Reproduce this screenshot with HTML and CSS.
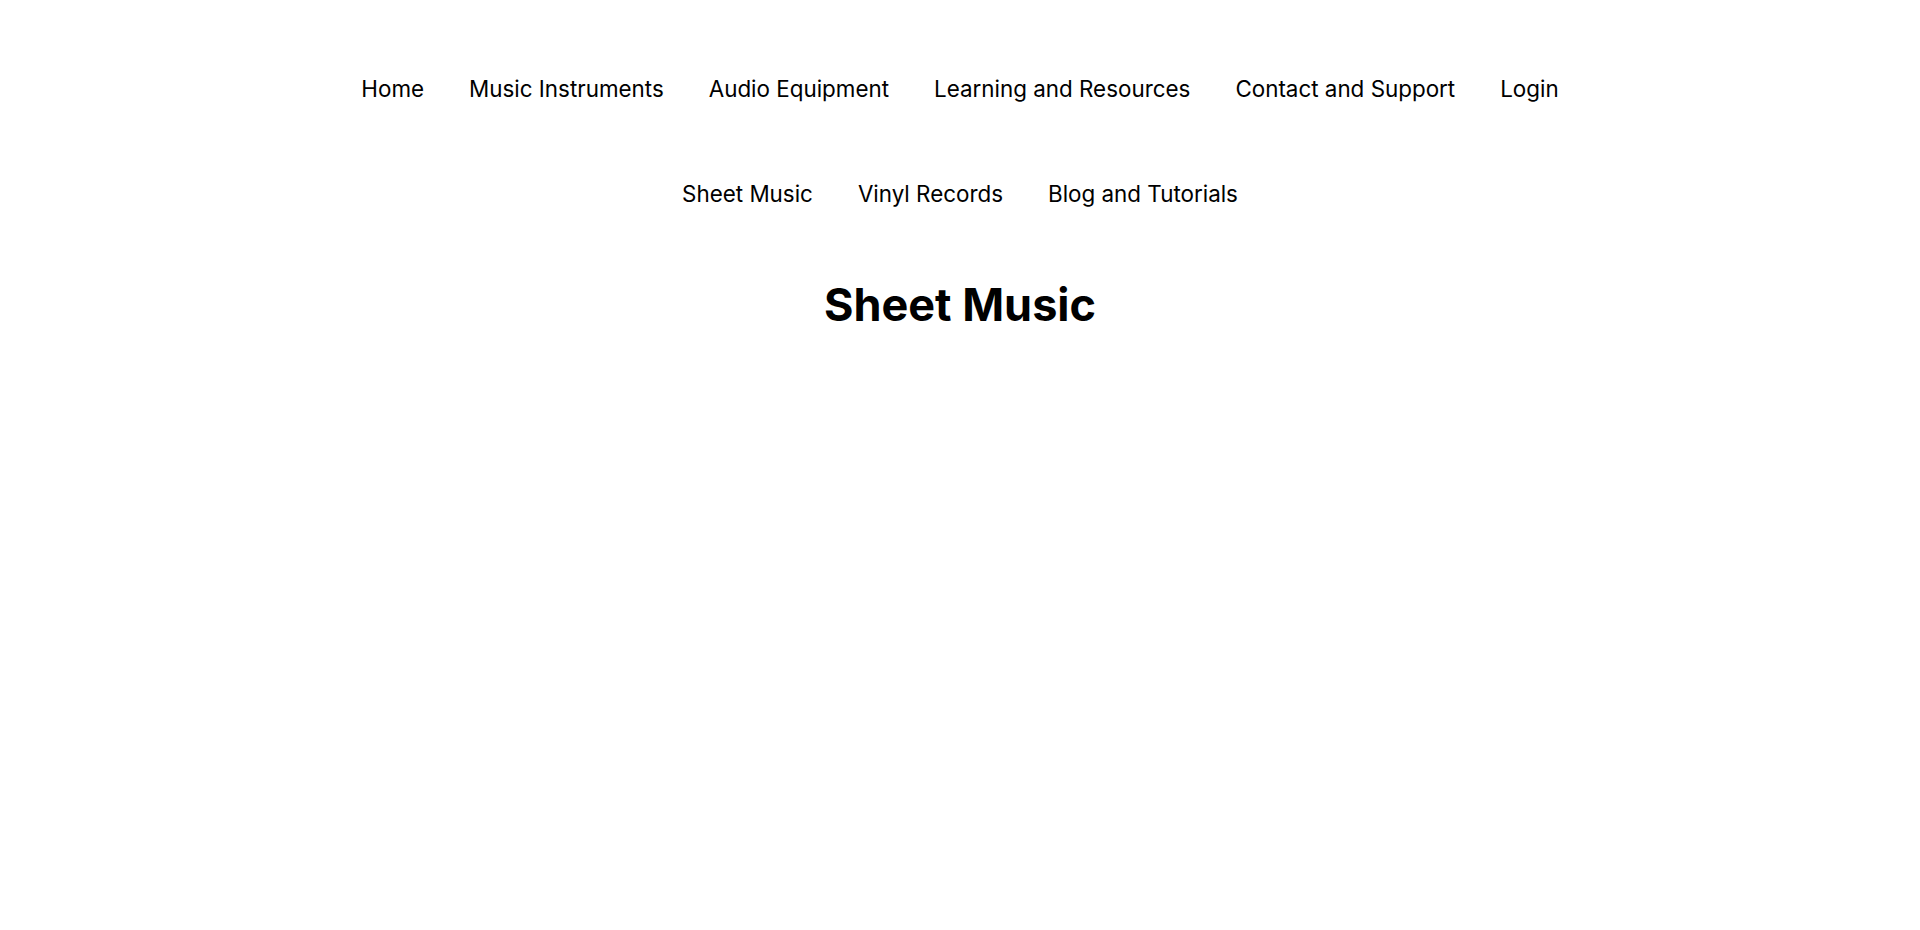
FILE: index.html
```html
<!DOCTYPE html>
<html lang="en">
<head>
<meta charset="utf-8">
<title>Sheet Music</title>
<link rel="stylesheet" href="styles.css">
</head>
<body>
<header class="site-header">
  <nav class="nav nav-main">
    <a class="nav-link" href="#">Home</a>
    <a class="nav-link" href="#">Music Instruments</a>
    <a class="nav-link" href="#">Audio Equipment</a>
    <a class="nav-link" href="#">Learning and Resources</a>
    <a class="nav-link" href="#">Contact and Support</a>
    <a class="nav-link" href="#">Login</a>
  </nav>
  <nav class="nav nav-sub">
    <a class="nav-link" href="#">Sheet Music</a>
    <a class="nav-link" href="#">Vinyl Records</a>
    <a class="nav-link" href="#">Blog and Tutorials</a>
  </nav>
</header>
<main class="content">
  <h1 class="page-title">Sheet Music</h1>
</main>
</body>
</html>
```
FILE: styles.css
```css
html, body {
  margin: 0;
  padding: 0;
  background: #ffffff;
}
body {
  font-family: Inter, "Noto Sans", sans-serif;
  color: #000000;
}
.site-header {
  display: flex;
  flex-direction: column;
}
.nav {
  display: flex;
  justify-content: center;
  gap: 45px;
}
.nav-main {
  padding-top: 75px;
}
.nav-sub {
  padding-top: 78px;
}
.nav-link {
  font-size: 22.4px;
  line-height: 27px;
  color: #000000;
  text-decoration: none;
}
.content {
  display: flex;
  justify-content: center;
}
.page-title {
  margin: 71px 0 0;
  font-size: 45px;
  line-height: 54px;
  font-weight: 700;
}
```
